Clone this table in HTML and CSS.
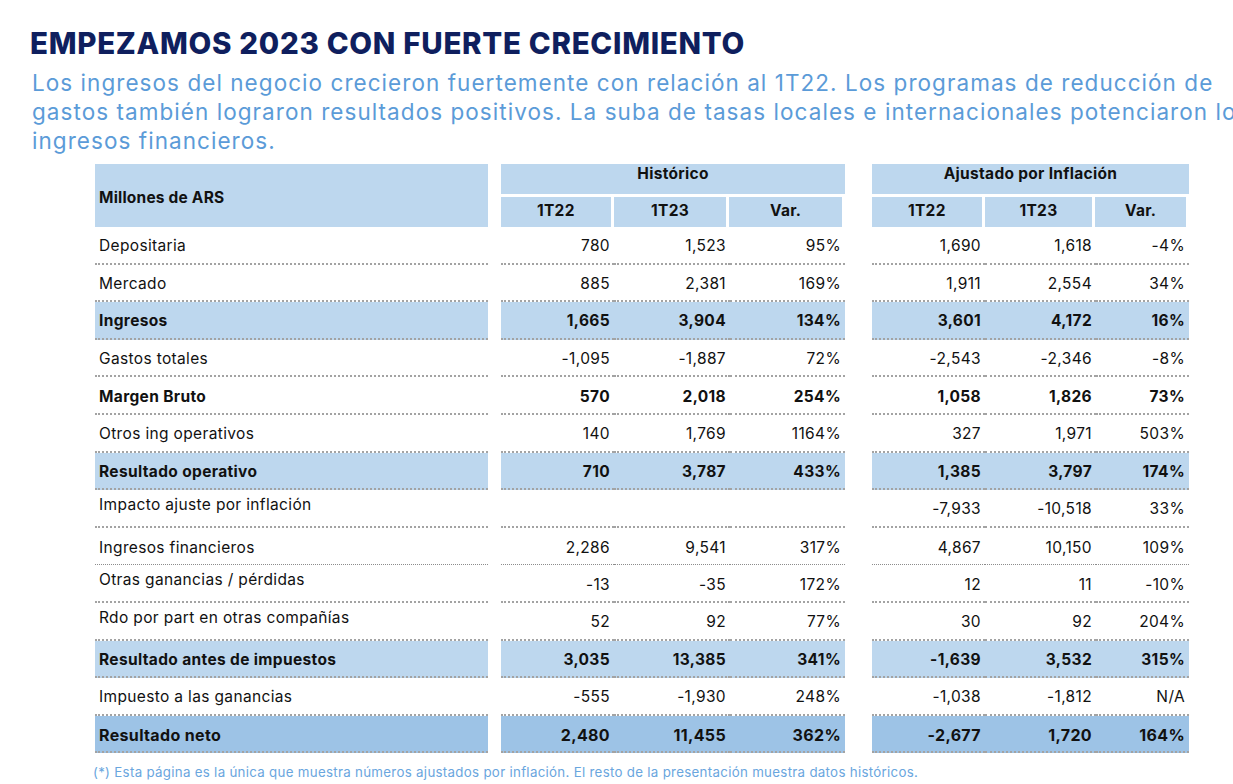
FILE: index.html
```html
<!DOCTYPE html>
<html lang="es">
<head>
<meta charset="utf-8">
<title>Empezamos 2023 con fuerte crecimiento</title>
<link rel="stylesheet" href="styles.css">
</head>
<body>
<div class="page">
  <h1 class="title">EMPEZAMOS 2023 CON FUERTE CRECIMIENTO</h1>
  <p class="lead">Los ingresos del negocio crecieron fuertemente con relación al 1T22. Los programas de reducción de<br>gastos también lograron resultados positivos. La suba de tasas locales e internacionales potenciaron los<br>ingresos financieros.</p>

  <div class="table">
    <div class="head">
      <div class="hlabel">Millones de ARS</div>
      <div class="hgroup hist">
        <div class="htitle">Histórico</div>
        <div class="hsubs">
          <div class="hsub c1">1T22</div><div class="hsub c2">1T23</div><div class="hsub c3">Var.</div>
        </div>
      </div>
      <div class="hgroup adj">
        <div class="htitle">Ajustado por Inflación</div>
        <div class="hsubs">
          <div class="hsub c4">1T22</div><div class="hsub c5">1T23</div><div class="hsub c6">Var.</div>
        </div>
      </div>
    </div>

    <div class="row"><div class="lbl">Depositaria</div><div class="sp"></div><div class="n">780</div><div class="n">1,523</div><div class="n">95%</div><div class="sp"></div><div class="n">1,690</div><div class="n">1,618</div><div class="n">-4%</div></div>
    <div class="row"><div class="lbl">Mercado</div><div class="sp"></div><div class="n">885</div><div class="n">2,381</div><div class="n">169%</div><div class="sp"></div><div class="n">1,911</div><div class="n">2,554</div><div class="n">34%</div></div>
    <div class="row hl"><div class="lbl">Ingresos</div><div class="sp"></div><div class="n">1,665</div><div class="n">3,904</div><div class="n">134%</div><div class="sp"></div><div class="n">3,601</div><div class="n">4,172</div><div class="n">16%</div></div>
    <div class="row"><div class="lbl">Gastos totales</div><div class="sp"></div><div class="n">-1,095</div><div class="n">-1,887</div><div class="n">72%</div><div class="sp"></div><div class="n">-2,543</div><div class="n">-2,346</div><div class="n">-8%</div></div>
    <div class="row bold"><div class="lbl">Margen Bruto</div><div class="sp"></div><div class="n">570</div><div class="n">2,018</div><div class="n">254%</div><div class="sp"></div><div class="n">1,058</div><div class="n">1,826</div><div class="n">73%</div></div>
    <div class="row"><div class="lbl">Otros ing operativos</div><div class="sp"></div><div class="n">140</div><div class="n">1,769</div><div class="n">1164%</div><div class="sp"></div><div class="n">327</div><div class="n">1,971</div><div class="n">503%</div></div>
    <div class="row hl"><div class="lbl">Resultado operativo</div><div class="sp"></div><div class="n">710</div><div class="n">3,787</div><div class="n">433%</div><div class="sp"></div><div class="n">1,385</div><div class="n">3,797</div><div class="n">174%</div></div>
    <div class="row top"><div class="lbl">Impacto ajuste por inflación</div><div class="sp"></div><div class="n"></div><div class="n"></div><div class="n"></div><div class="sp"></div><div class="n">-7,933</div><div class="n">-10,518</div><div class="n">33%</div></div>
    <div class="row fine"><div class="lbl">Ingresos financieros</div><div class="sp"></div><div class="n">2,286</div><div class="n">9,541</div><div class="n">317%</div><div class="sp"></div><div class="n">4,867</div><div class="n">10,150</div><div class="n">109%</div></div>
    <div class="row top"><div class="lbl">Otras ganancias / pérdidas</div><div class="sp"></div><div class="n">-13</div><div class="n">-35</div><div class="n">172%</div><div class="sp"></div><div class="n">12</div><div class="n">11</div><div class="n">-10%</div></div>
    <div class="row top"><div class="lbl">Rdo por part en otras compañías</div><div class="sp"></div><div class="n">52</div><div class="n">92</div><div class="n">77%</div><div class="sp"></div><div class="n">30</div><div class="n">92</div><div class="n">204%</div></div>
    <div class="row hl"><div class="lbl">Resultado antes de impuestos</div><div class="sp"></div><div class="n">3,035</div><div class="n">13,385</div><div class="n">341%</div><div class="sp"></div><div class="n">-1,639</div><div class="n">3,532</div><div class="n">315%</div></div>
    <div class="row"><div class="lbl">Impuesto a las ganancias</div><div class="sp"></div><div class="n">-555</div><div class="n">-1,930</div><div class="n">248%</div><div class="sp"></div><div class="n">-1,038</div><div class="n">-1,812</div><div class="n">N/A</div></div>
    <div class="row hl2"><div class="lbl">Resultado neto</div><div class="sp"></div><div class="n">2,480</div><div class="n">11,455</div><div class="n">362%</div><div class="sp"></div><div class="n">-2,677</div><div class="n">1,720</div><div class="n">164%</div></div>
  </div>

  <p class="note">(*) Esta página es la única que muestra números ajustados por inflación. El resto de la presentación muestra datos históricos.</p>
</div>
</body>
</html>
```

FILE: styles.css
```css
html, body {
  margin: 0;
  padding: 0;
  background: #ffffff;
  overflow: hidden;
}

.page {
  width: 1233px;
  height: 784px;
  font-family: Inter, "Open Sans", "DejaVu Sans", sans-serif;
  color: #111111;
}

.title {
  margin: 0;
  padding: 28px 0 0 30px;
  font-size: 29.5px;
  line-height: 30px;
  font-weight: 800;
  color: #0f1f5e;
  letter-spacing: 0.7px;
}

.lead {
  margin: 10px 0 0 32px;
  font-size: 22.5px;
  line-height: 29px;
  font-weight: 400;
  color: #5b9bd8;
  white-space: nowrap;
  letter-spacing: 1.05px;
}

.table {
  margin: 9px 0 0 95px;
  width: 1094px;
}

.head {
  display: flex;
  height: 63px;
}

.hlabel {
  width: 393px;
  box-sizing: border-box;
  background: #bdd7ee;
  padding: 3px 0 0 4px;
  display: flex;
  align-items: center;
  font-weight: 700;
  font-size: 15.5px;
  letter-spacing: 0.2px;
}

.hgroup {
  display: flex;
  flex-direction: column;
  gap: 3px;
}

.hist { width: 344px; margin-left: 13px; }
.adj { width: 317px; margin-left: 27px; }

.htitle {
  height: 30px;
  background: #bdd7ee;
  text-align: center;
  font-weight: 700;
  font-size: 15.5px;
  line-height: 20px;
  letter-spacing: 0.3px;
}

.hsubs {
  display: flex;
  height: 30px;
}

.hsub {
  background: #bdd7ee;
  text-align: center;
  font-weight: 700;
  font-size: 15.5px;
  line-height: 28px;
  letter-spacing: 0.3px;
  box-sizing: border-box;
  margin-right: 3px;
}

.c1 { width: 110px; }
.c2 { width: 113px; }
.c3 { width: 113px; }
.c4 { width: 110px; }
.c5 { width: 108px; }
.c6 { width: 91px; }

.row {
  display: grid;
  grid-template-columns: 393px 13px 113px 116px 115px 27px 113px 111px 93px;
  height: 37.6px;
  font-size: 15.5px;
  letter-spacing: 0.35px;
}

.row > div {
  display: flex;
  align-items: center;
  box-sizing: border-box;
  padding-top: 2px;
}

.row > .lbl,
.row > .n {
  border-bottom: 2px dotted #a3a3a3;
}

.row.fine > .lbl,
.row.fine > .n {
  border-bottom: 1px dotted #8c8c8c;
}

.lbl {
  padding-left: 4px;
}

.n {
  justify-content: flex-end;
  padding-right: 4px;
}

.row.top > .lbl {
  align-items: flex-start;
  padding-top: 5px;
}

.row.hl > .lbl,
.row.hl > .n {
  background: #bdd7ee;
  font-weight: 700;
}

.row.hl2 > .lbl,
.row.hl2 > .n {
  background: #9dc3e6;
  font-weight: 700;
  font-size: 16px;
}

.row.bold > div {
  font-weight: 700;
}

.note {
  margin: 11px 0 0 93px;
  font-size: 13.3px;
  color: #6aa6de;
  white-space: nowrap;
  letter-spacing: 0.3px;
}
```
